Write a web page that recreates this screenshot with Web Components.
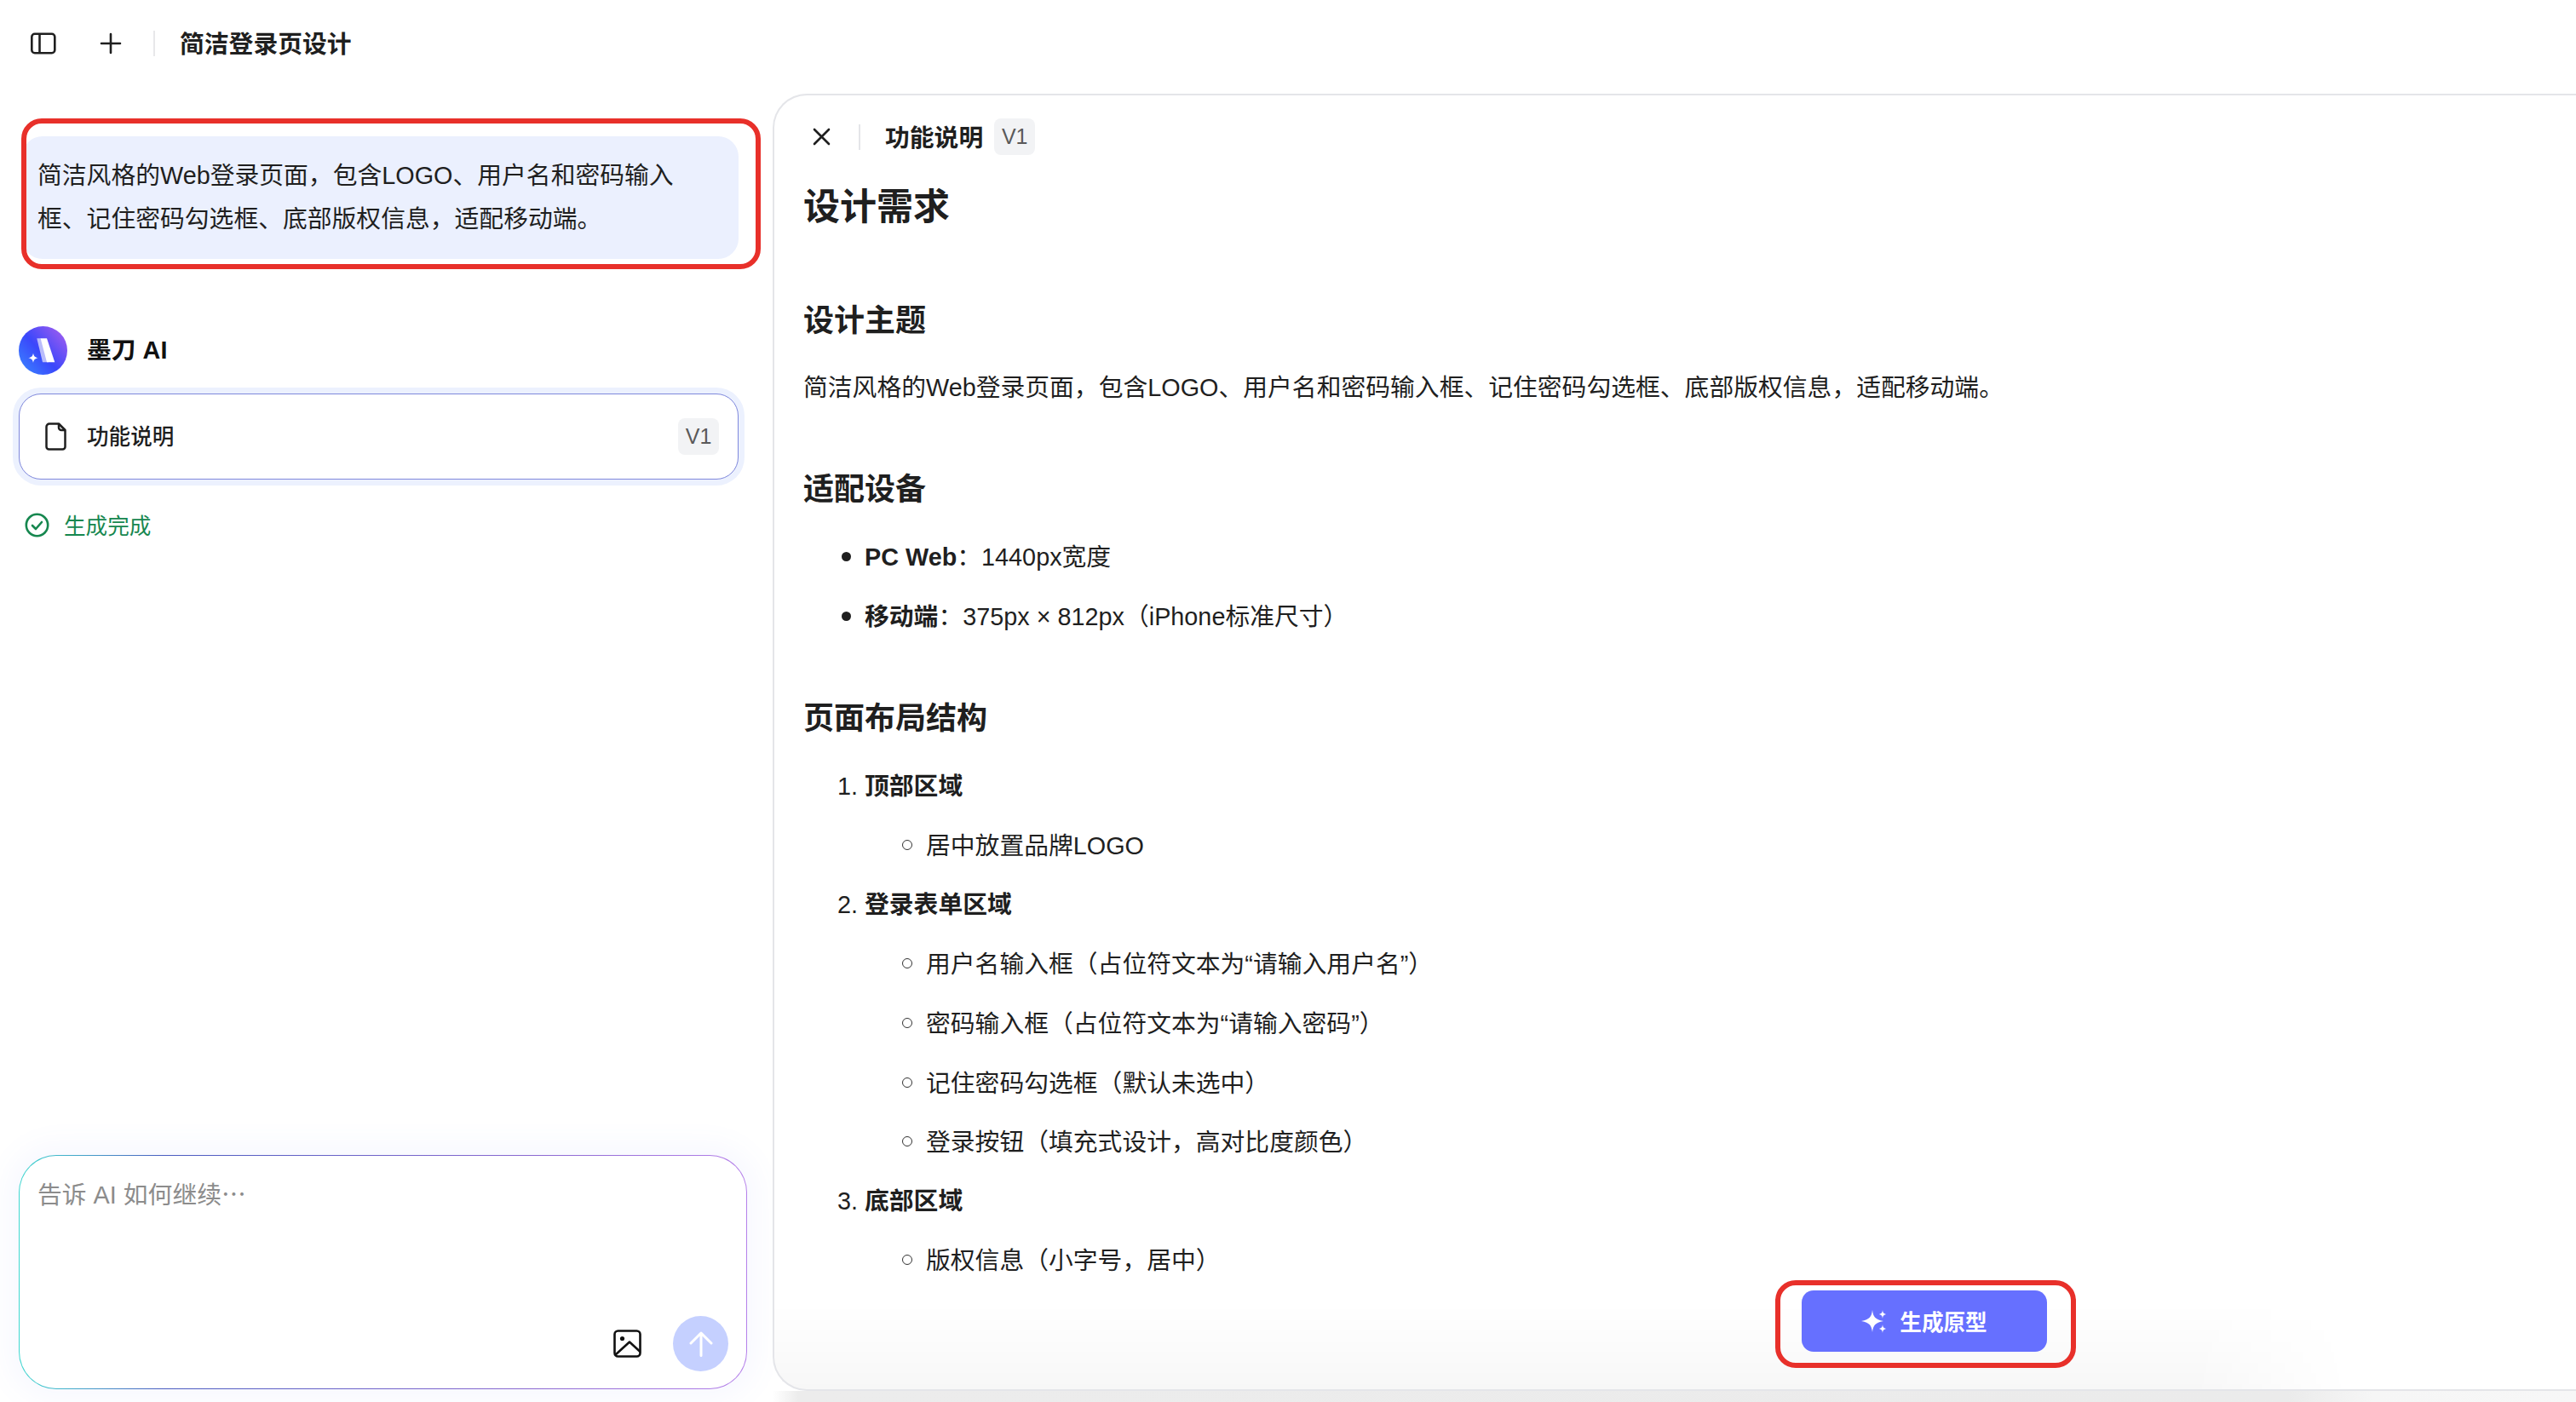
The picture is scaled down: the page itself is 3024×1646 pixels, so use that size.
<!DOCTYPE html>
<html lang="zh-CN">
<head>
<meta charset="utf-8">
<title>简洁登录页设计</title>
<style>
  html, body { margin: 0; padding: 0; background: #fff; }
  body {
    width: 3024px; height: 1646px; overflow: hidden;
    font-family: "Liberation Sans", "Noto Sans CJK SC", sans-serif; color: #1f1f1f; font-size: 28.8px;
  }
</style>
</head>
<body>
<app-shell>
  <top-bar slot="top">简洁登录页设计</top-bar>
  <chat-column slot="left">
    <user-bubble>简洁风格的Web登录页面，包含LOGO、用户名和密码输入框、记住密码勾选框、底部版权信息，适配移动端。</user-bubble>
    <agent-row>墨刀 AI</agent-row>
    <artifact-card>功能说明</artifact-card>
    <status-line>生成完成</status-line>
    <composer-box></composer-box>
  </chat-column>
  <doc-panel slot="right"></doc-panel>
</app-shell>

<script>
const FONT = '"Liberation Sans", "Noto Sans CJK SC", sans-serif';
function define(name, css, html, setup) {
  customElements.define(name, class extends HTMLElement {
    constructor() {
      super();
      const root = this.attachShadow({ mode: 'open' });
      root.innerHTML = '<style>' + css + '</style>' + html;
      if (setup) setup(root, this);
    }
  });
}

define('version-tag', `
  :host { display: inline-flex; align-items: center; justify-content: center; width: 48px; height: 43px;
    background: #f2f3f5; border-radius: 8px; color: #5a5a5a; font: 400 25px ${FONT}; flex: none; }
`, `<slot></slot>`);

define('app-shell', `
  :host { display: flex; flex-direction: column; width: 3024px; height: 1646px; }
  .top { flex: none; height: 110px; }
  .bottom { flex: 1; display: flex; min-height: 0; padding-bottom: 13px; }
`, `<div class="top"><slot name="top"></slot></div>
    <div class="bottom"><slot name="left"></slot><slot name="right"></slot></div>`);

define('top-bar', `
  :host { display: flex; align-items: center; height: 102px; padding-left: 35px; box-sizing: border-box;
    font: 600 28.8px ${FONT}; color: #1f1f1f; }
  svg { display: block; flex: none; }
  .plus { margin-left: 50px; }
  .sep { width: 2px; height: 30px; background: #e8e8ea; margin: 0 29px 0 37px; }
  .t { margin-bottom: 3px; }
`, `
  <svg width="32" height="26" viewBox="0 0 32 26" fill="none" stroke="#1f1f1f" stroke-width="2.6">
    <rect x="2.3" y="1.8" width="27" height="22.4" rx="3.5"/><path d="M11.5 2v22"/>
  </svg>
  <svg class="plus" width="26" height="26" viewBox="0 0 26 26" fill="none" stroke="#1f1f1f" stroke-width="2.6" stroke-linecap="round">
    <path d="M13 2v22M2 13h22"/>
  </svg>
  <div class="sep"></div>
  <div class="t"><slot></slot></div>`);

define('chat-column', `
  :host { display: flex; flex-direction: column; flex: none; width: 907px; box-sizing: border-box;
    padding: 50px 0 2px 22px; height: 100%; }
`, `<slot></slot>`);

define('user-bubble', `
  :host { display: block; position: relative; margin-left: 4px; width: 841px; box-sizing: border-box; padding: 21px 55px 21px 18px;
    background: #ebf0fe; border-radius: 24px; font: 400 28.8px/51px ${FONT}; color: #1f1f1f; }
  :host::after { content: ""; position: absolute; left: -1px; top: -21px; width: 868px; height: 177px;
    box-sizing: border-box; border: 6px solid #e8302a; border-radius: 24px; pointer-events: none; }
`, `<slot></slot>`);

define('agent-row', `
  :host { display: flex; align-items: center; gap: 23px; margin-top: 79px; height: 57px;
    font: 600 28.8px/57px ${FONT}; color: #111; }
  svg { display: block; flex: none; }
`, `
  <svg width="57" height="57" viewBox="0 0 57 57">
    <defs>
      <linearGradient id="g" x1="0.1" y1="0.9" x2="0.95" y2="0.15">
        <stop offset="0" stop-color="#3a7cff"/><stop offset="0.45" stop-color="#3a47fb"/><stop offset="1" stop-color="#9a5cf0"/>
      </linearGradient>
    </defs>
    <circle cx="28.5" cy="28.5" r="28.5" fill="url(#g)"/>
    <path d="M21.3 14.2H26L35 42.2H28Z" fill="#b9bcfb"/>
    <path d="M25.6 14.2H33L42.3 42.2H33Z" fill="#fff"/>
    <path d="M17 31.5C17.6 35 18.9 36.5 22.7 37.2C18.9 37.9 17.6 39.4 17 42.9C16.4 39.4 15.1 37.9 11.3 37.2C15.1 36.5 16.4 35 17 31.5Z" fill="#fff"/>
  </svg>
  <slot></slot>`);

define('artifact-card', `
  :host { display: flex; align-items: center; margin-top: 22px; width: 845px; height: 101px; box-sizing: border-box;
    padding: 0 22px 0 30px; border: 1.5px solid #7f88dc; border-radius: 26px; background: #fff;
    box-shadow: 0 0 0 7px #ecf1fe; font: 500 25.6px ${FONT}; color: #1f1f1f; }
  svg { display: block; flex: none; margin-right: 24px; }
  .t { flex: 1; margin-bottom: 4px; }
`, `
  <svg width="25" height="33" viewBox="0 0 25 33" fill="none" stroke="#1f1f1f" stroke-width="2.5" stroke-linejoin="round">
    <path d="M5 1.5H16L23.5 9V28.5A3 3 0 0 1 20.5 31.5H4.5A3 3 0 0 1 1.5 28.5V5A3.5 3.5 0 0 1 5 1.5Z"/>
    <path d="M16 1.5V6A3 3 0 0 0 19 9H23.5"/>
  </svg>
  <div class="t"><slot></slot></div>
  <version-tag>V1</version-tag>`);

define('status-line', `
  :host { display: flex; align-items: center; gap: 17px; margin: 39px 0 0 7px; height: 29px;
    font: 400 25.6px ${FONT}; color: #16874f; }
  svg { display: block; flex: none; }
  .t { margin-bottom: 3px; }
`, `
  <svg width="29" height="29" viewBox="0 0 29 29" fill="none" stroke="#16874f" stroke-width="2.6" stroke-linecap="round" stroke-linejoin="round">
    <circle cx="14.5" cy="14.5" r="12.7"/><path d="M9 15l4 4 7-8"/>
  </svg>
  <div class="t"><slot></slot></div>`);

define('composer-box', `
  :host { display: block; position: relative; margin-top: auto; width: 855px; height: 275px; box-sizing: border-box;
    border: 1.5px solid transparent; border-radius: 44px;
    background: linear-gradient(#fff, #fff) padding-box,
      linear-gradient(90deg, #3fd8d0 0%, #4a5cc0 20%, #8a68d0 70%, #b580ea 100%) border-box;
    box-shadow: 0 0 34px 12px rgba(110, 130, 255, .055);
    padding: 19px 21px; font: 400 28.8px/50px ${FONT}; color: #8c8c8c; }
  .dots { font-family: "Noto Sans CJK SC", sans-serif; }
  .actions { position: absolute; right: 21px; bottom: 20px; display: flex; align-items: center; gap: 37px; }
  .img { display: block; }
  .send { width: 65px; height: 65px; border-radius: 50%; background: #c5d0ff; display: flex; align-items: center; justify-content: center; }
`, `
  <div>告诉 AI 如何继续<span class="dots">…</span></div>
  <div class="actions">
    <svg class="img" width="33" height="33" viewBox="0 0 33 33" fill="none" stroke="#111" stroke-width="2.6" stroke-linejoin="round">
      <rect x="1.5" y="1.5" width="30" height="30" rx="4"/>
      <circle cx="10.5" cy="10.5" r="2.6" fill="#111" stroke="none"/>
      <path d="M2 30L19 14.5L31.5 26"/>
    </svg>
    <div class="send">
      <svg width="28" height="30" viewBox="0 0 28 30" fill="none" stroke="#fff" stroke-width="3" stroke-linecap="round" stroke-linejoin="round">
        <path d="M14 28.5V2M2 14L14 2L26 14"/>
      </svg>
    </div>
  </div>`);

define('gen-button', `
  :host { display: flex; align-items: center; justify-content: center; gap: 15px; position: absolute; left: 1206px; bottom: 44px;
    width: 288px; height: 72px; background: #6670ff; border-radius: 14px; color: #fff; font: 600 25.6px ${FONT}; z-index: 2; }
  :host::after { content: ""; position: absolute; left: -31px; top: -12px; width: 353px; height: 103px; box-sizing: border-box;
    border: 6px solid #e8302a; border-radius: 24px; pointer-events: none; }
  svg { display: block; flex: none; }
  .t { margin-bottom: 2px; }
`, `
  <svg width="30" height="28" viewBox="0 0 30 28" fill="#fff">
    <path d="M13 1C14 9 16 12 26 14C16 16 14 19 13 27C12 19 10 16 0 14C10 12 12 9 13 1Z"/>
    <path d="M25 1C25.4 4 26 5 29 6C26 7 25.4 8 25 11C24.6 8 24 7 21 6C24 5 24.6 4 25 1Z"/>
    <path d="M25 18C25.4 21 26 22 29 23C26 24 25.4 25 25 28C24.6 25 24 24 21 23C24 22 24.6 21 25 18Z"/>
  </svg>
  <div class="t"><slot></slot></div>`);

define('spec-doc', `
  :host { display: block; padding: 31px 0 0 34px; font: 400 28.8px/50px ${FONT}; color: #1f1f1f; }
  h1 { margin: 0 0 79px; font: 600 43px/60px ${FONT}; color: #1f1f1f; }
  h2 { margin: 0 0 28px; font: 600 36px/50px ${FONT}; color: #1f1f1f; }
  p { margin: 0 0 70px; }
  ul, ol { margin: 0; padding: 0 0 0 72px; }
  li { margin: 0 0 19.6px; position: relative; }
  li > ul { margin: 20.6px 0 -1px; }
  ul { list-style: none; }
  ul > li::before { content: ""; position: absolute; left: -27px; top: 19px; width: 11px; height: 11px; border-radius: 50%; background: #1f1f1f; }
  ol ul > li::before { left: -28px; top: 18px; width: 12px; height: 12px; box-sizing: border-box; background: none; border: 1.5px solid #333; }
  .sec { margin-bottom: 70px; }
  ul.sec > li:last-child { margin-bottom: 0; }
  h2.tight { margin-bottom: 29px; }
  b { font-weight: 600; }
`, `
  <h1>设计需求</h1>
  <h2>设计主题</h2>
  <p>简洁风格的Web登录页面，包含LOGO、用户名和密码输入框、记住密码勾选框、底部版权信息，适配移动端。</p>
  <h2 class="tight">适配设备</h2>
  <ul class="sec">
    <li><b>PC Web</b>：1440px宽度</li>
    <li><b>移动端</b>：375px × 812px（iPhone标准尺寸）</li>
  </ul>
  <h2 class="tight">页面布局结构</h2>
  <ol>
    <li><b>顶部区域</b>
      <ul><li>居中放置品牌LOGO</li></ul>
    </li>
    <li><b>登录表单区域</b>
      <ul>
        <li>用户名输入框（占位符文本为“请输入用户名”）</li>
        <li>密码输入框（占位符文本为“请输入密码”）</li>
        <li>记住密码勾选框（默认未选中）</li>
        <li>登录按钮（填充式设计，高对比度颜色）</li>
      </ul>
    </li>
    <li><b>底部区域</b>
      <ul><li>版权信息（小字号，居中）</li></ul>
    </li>
  </ol>`);

define('doc-panel', `
  :host { display: block; position: relative; flex: 1; min-width: 0; box-sizing: border-box; height: 100%;
    border: 2px solid #e4e5e9; border-right: 0; border-radius: 40px 0 0 40px; background: #fff; }
  .bar { display: flex; align-items: center; padding: 27px 0 0 45px; height: 43px; font: 600 28.8px ${FONT}; color: #1f1f1f; }
  .sep { width: 2px; height: 30px; background: #e4e5e9; margin: 0 29px 0 33px; }
  .title { margin: 0 13px 3px 0; }
  svg { display: block; flex: none; }
  .inner { position: relative; height: 100%; overflow: hidden; border-radius: 38px 0 0 38px; }
  .fade { position: absolute; left: 0; width: 1850px; bottom: 0; height: 100px;
    background: linear-gradient(to top, rgba(0,0,0,.03), rgba(0,0,0,0));
    -webkit-mask-image: linear-gradient(90deg, #000 90%, transparent 100%); mask-image: linear-gradient(90deg, #000 90%, transparent 100%); }
  .strip { position: absolute; left: -2px; right: 0; bottom: -15px; height: 13px;
    background: linear-gradient(90deg, #fff 0, #ececec 30px, #ebebeb 1780px, #f6f6f6 1880px, #f7f7f7 100%); }
`, `
  <div class="inner">
    <div class="bar">
      <svg width="21" height="21" viewBox="0 0 21 21" fill="none" stroke="#1f1f1f" stroke-width="2.6" stroke-linecap="round"><path d="M2 2l17 17M19 2L2 19"/></svg>
      <div class="sep"></div>
      <div class="title">功能说明</div>
      <version-tag>V1</version-tag>
    </div>
    <spec-doc></spec-doc>
    <div class="fade"></div>
  </div>
  <div class="strip"></div>
  <gen-button>生成原型</gen-button>`);
</script>
</body>
</html>
